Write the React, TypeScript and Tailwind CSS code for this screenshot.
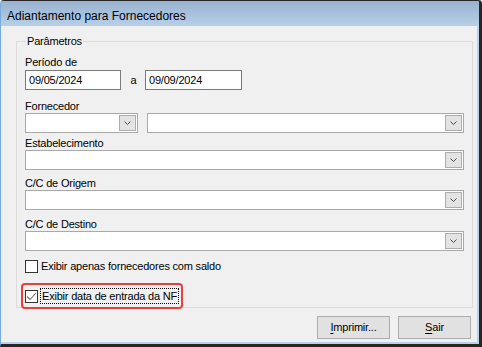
import React from "react";

const font = "font-['Liberation_Sans',Arial,sans-serif]";

function Chevron() {
  return (
    <svg width="7" height="4" viewBox="0 0 7 4" fill="none">
      <path d="M0.5 0.5L3.5 3.5L6.5 0.5" stroke="#4a4a4a" strokeWidth="1" />
    </svg>
  );
}

function Combo({ className = "" }: { className?: string }) {
  return (
    <div
      className={`flex h-[20px] items-center justify-end border border-[#a9a9a9] bg-white pr-[1px] ${className}`}
    >
      <div className="flex h-[16px] w-[17px] items-center justify-center border border-[#adadad] bg-[#e3e3e3]">
        <Chevron />
      </div>
    </div>
  );
}

function Label({ text, className = "" }: { text: string; className?: string }) {
  return <div className={`h-[13px] leading-[13px] ${className}`}>{text}</div>;
}

function Check({ checked = false }: { checked?: boolean }) {
  return (
    <div className="flex h-[13px] w-[13px] shrink-0 items-center justify-center border border-[#333] bg-white">
      {checked && (
        <svg width="11" height="11" viewBox="0 0 11 11" fill="none">
          <path d="M1 5.5L4 8.5L10 2" stroke="#707070" strokeWidth="1.1" />
        </svg>
      )}
    </div>
  );
}

function Button({ children }: { children: React.ReactNode }) {
  return (
    <div className="flex h-[23px] w-[73px] items-center justify-center border border-[#adadad] bg-[#e1e1e1]">
      {children}
    </div>
  );
}

export default function App() {
  return (
    <div
      className={`flex h-[347px] w-[482px] flex-col overflow-hidden rounded-t-[4px] border-t border-r-[3px] border-b-[3px] border-l border-[#262626] border-l-[#78abdd] bg-[#b9d1ea] text-[11px] tracking-[-0.2px] text-black ${font}`}
    >
      {/* Title bar */}
      <div className="h-[25px] shrink-0 bg-gradient-to-b from-[#98b2cf] to-[#b8cfe8] pl-[6px] pt-[8px] text-[12px] leading-[14px] tracking-normal">
        Adiantamento para Fornecedores
      </div>

      {/* Client area */}
      <div className="flex flex-1 pr-[2px] pb-[2px]">
        <div className="flex flex-1 flex-col bg-[#f0f0f0]">
          <fieldset className="ml-[15px] mr-[4px] mt-[9px] h-[273px] border border-[#dcdcdc] px-[8px] pt-[8px]">
            <legend className="ml-[1px] px-[1px] leading-[13px]">Parâmetros</legend>

            <Label text="Período de" />
            <div className="mt-[1px] flex items-center">
              <div className="flex h-[20px] w-[96px] items-center border border-[#7a7a7a] bg-white pl-[3px]">
                09/05/2024
              </div>
              <span className="w-[24px] pl-[1px] text-center">a</span>
              <div className="flex h-[20px] w-[97px] items-center border border-[#7a7a7a] bg-white pl-[3px]">
                09/09/2024
              </div>
            </div>

            <Label text="Fornecedor" className="mt-[10px]" />
            <div className="flex gap-[9px]">
              <Combo className="w-[113px]" />
              <Combo className="flex-1" />
            </div>

            <Label text="Estabelecimento" className="mt-[4px]" />
            <Combo />

            <Label text="C/C de Origem" className="mt-[7px]" />
            <Combo />

            <Label text="C/C de Destino" className="mt-[8px]" />
            <Combo />

            <div className="mt-[9px] flex h-[13px] items-center gap-[3px] whitespace-nowrap leading-[13px]">
              <Check />
              <span>Exibir apenas fornecedores com saldo</span>
            </div>

            <div className="-ml-[4px] mt-[10px] flex h-[26px] w-[162px] items-center gap-[2px] rounded-[4px] border-2 border-[#e6403f] pl-[2px]">
              <Check checked />
              <span className="flex h-[16px] w-[139px] items-center whitespace-nowrap border border-dotted border-black px-[1px] leading-[13px]">
                Exibir data de entrada da NF
              </span>
            </div>
          </fieldset>

          <div className="mt-[8px] flex justify-end gap-[8px] pr-[6px]">
            <Button>
              <span>
                <span className="underline underline-offset-2">I</span>mprimir...
              </span>
            </Button>
            <Button>
              <span>
                <span className="underline underline-offset-2">S</span>air
              </span>
            </Button>
          </div>
        </div>
      </div>
    </div>
  );
}
